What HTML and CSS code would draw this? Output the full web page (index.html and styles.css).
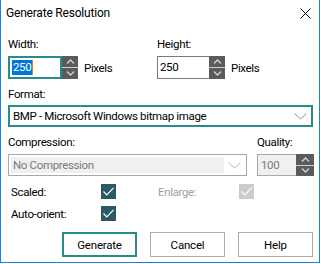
FILE: index.html
```html
<!DOCTYPE html>
<html lang="en">
<head>
  <meta charset="UTF-8">
  <title>Generate Resolution</title>
  <link rel="stylesheet" href="styles.css">
</head>
<body>
  <div class="dialog">
    <!-- Title bar -->
    <div class="titlebar">
      <span class="title">Generate Resolution</span>
      <svg class="close" width="11" height="11" viewBox="0 0 11 11">
        <path d="M0.5 0.5 L10.5 10.5 M10.5 0.5 L0.5 10.5" stroke="#000" stroke-width="1" fill="none"/>
      </svg>
    </div>

    <div class="content">
      <div class="size-row">
        <div class="field">
          <div class="lbl">Width:</div>
          <div class="spin-row">
            <div class="spin">
              <div class="spin-input focused"><span class="sel">250</span><span class="caret"></span></div>
              <div class="spin-btns">
                <span class="btn-up"><svg width="9" height="5" viewBox="0 0 9 5"><path d="M1 4.5 L4.5 1 L8 4.5" stroke="#d4d4d4" stroke-width="1.3" fill="none"/></svg></span>
                <span class="btn-down"><svg width="9" height="5" viewBox="0 0 9 5"><path d="M1 0.5 L4.5 4 L8 0.5" stroke="#d4d4d4" stroke-width="1.3" fill="none"/></svg></span>
              </div>
            </div>
            <span class="unit">Pixels</span>
          </div>
        </div>
        <div class="field">
          <div class="lbl">Height:</div>
          <div class="spin-row">
            <div class="spin">
              <div class="spin-input">250</div>
              <div class="spin-btns">
                <span class="btn-up"><svg width="9" height="5" viewBox="0 0 9 5"><path d="M1 4.5 L4.5 1 L8 4.5" stroke="#d4d4d4" stroke-width="1.3" fill="none"/></svg></span>
                <span class="btn-down"><svg width="9" height="5" viewBox="0 0 9 5"><path d="M1 0.5 L4.5 4 L8 0.5" stroke="#d4d4d4" stroke-width="1.3" fill="none"/></svg></span>
              </div>
            </div>
            <span class="unit">Pixels</span>
          </div>
        </div>
      </div>

      <div class="lbl lbl-format">Format:</div>
      <div class="select focused">
        <span class="select-text">BMP - Microsoft Windows bitmap image</span>
        <svg class="chev" width="13" height="7" viewBox="0 0 13 7"><path d="M0.5 0.5 L6.5 6 L12.5 0.5" stroke="#8a8a8a" stroke-width="1" fill="none"/></svg>
      </div>

      <div class="comp-row">
        <div class="comp-field">
          <div class="lbl">Compression:</div>
          <div class="select disabled">
            <span class="select-text">No Compression</span>
            <svg class="chev" width="13" height="7" viewBox="0 0 13 7"><path d="M0.5 0.5 L6.5 6 L12.5 0.5" stroke="#b4b4b4" stroke-width="1" fill="none"/></svg>
          </div>
        </div>
        <div class="quality-field">
          <div class="lbl">Quality:</div>
          <div class="spin">
            <div class="spin-input disabled">100</div>
            <div class="spin-btns">
              <span class="btn-up"><svg width="9" height="5" viewBox="0 0 9 5"><path d="M1 4.5 L4.5 1 L8 4.5" stroke="#d4d4d4" stroke-width="1.3" fill="none"/></svg></span>
              <span class="btn-down"><svg width="9" height="5" viewBox="0 0 9 5"><path d="M1 0.5 L4.5 4 L8 0.5" stroke="#d4d4d4" stroke-width="1.3" fill="none"/></svg></span>
            </div>
          </div>
        </div>
      </div>

      <div class="check-row">
        <span class="check-lbl">Scaled:</span>
        <span class="checkbox"><svg width="11" height="9" viewBox="0 0 11 9"><path d="M0.5 4.5 L3.8 7.8 L10.5 0.8" stroke="#fff" stroke-width="1.2" fill="none"/></svg></span>
        <span class="check-lbl disabled-text enlarge">Enlarge:</span>
        <span class="checkbox off"><svg width="11" height="9" viewBox="0 0 11 9"><path d="M0.5 4.5 L3.8 7.8 L10.5 0.8" stroke="#fff" stroke-width="1.2" fill="none"/></svg></span>
      </div>
      <div class="check-row">
        <span class="check-lbl">Auto-orient:</span>
        <span class="checkbox"><svg width="11" height="9" viewBox="0 0 11 9"><path d="M0.5 4.5 L3.8 7.8 L10.5 0.8" stroke="#fff" stroke-width="1.2" fill="none"/></svg></span>
      </div>

      <div class="buttons">
        <button class="button default">Generate</button>
        <button class="button">Cancel</button>
        <button class="button">Help</button>
      </div>
    </div>
  </div>
</body>
</html>
```

FILE: styles.css
```css
body {
  margin: 0;
  padding: 0;
  background: #fff;
}

.dialog {
  width: 320px;
  height: 263px;
  box-sizing: border-box;
  border: 1px solid #1883d7;
  border-top: none;
  background: #fff;
  font-family: Roboto, "Liberation Sans", Arial, sans-serif;
  font-size: 11.5px;
  letter-spacing: -0.35px;
  color: #000;
}

.titlebar {
  height: 30px;
  display: flex;
  align-items: center;
  justify-content: space-between;
  padding: 0 8px 0 5px;
}

.title {
  font-size: 12px;
  letter-spacing: -0.2px;
  margin-top: -4px;
}

.close {
  margin-top: -3px;
}

.content {
  padding: 7px 6px 0 7px;
}

.lbl {
  height: 15px;
  line-height: 15px;
  margin-bottom: 4px;
}

/* width / height */
.size-row {
  display: flex;
}

.field {
  width: 149px;
}

.spin-row {
  display: flex;
  align-items: center;
  gap: 6px;
}

.spin {
  display: flex;
  height: 23px;
}

.spin-input {
  width: 52px;
  box-sizing: border-box;
  border: 1px solid #7a7a7a;
  border-right: none;
  padding: 0 2px;
  line-height: 21px;
  display: flex;
  align-items: center;
}

.spin-input.focused {
  width: 54px;
  border: 2px solid #2a8b8b;
}

.sel {
  background: #0078d7;
  color: #fff;
  line-height: 15px;
  padding: 0 1px;
}

.caret {
  width: 1px;
  height: 15px;
  background: #e07b28;
}

.spin-btns {
  width: 16px;
  display: flex;
  flex-direction: column;
  gap: 1px;
  background: #cfcfcf;
}

.spin-btns span {
  flex: 1;
  background: #5b5b5b;
  display: flex;
  align-items: center;
  justify-content: center;
}

/* select */
.lbl-format {
  margin-top: 8px;
  margin-bottom: 3px;
}

.select {
  height: 22px;
  box-sizing: border-box;
  border: 1px solid #7a7a7a;
  display: flex;
  align-items: center;
  padding: 2px 5px 2px 2px;
}

.select.focused {
  border: 2px solid #2a8b8b;
  padding: 0 4px 0 2px;
}

.select-text {
  flex: 1;
  padding-left: 1px;
}

.select.disabled {
  border-color: #a8a8a8;
  color: #7a7a7a;
}

.select.disabled .select-text {
  background: #f0f0f0;
  align-self: stretch;
  display: flex;
  align-items: center;
  padding-left: 2px;
  margin-right: 4px;
}

/* compression / quality */
.comp-row {
  display: flex;
  margin-top: 8px;
}

.comp-field {
  width: 239px;
}

.comp-field .select {
  width: 239px;
}

.quality-field {
  margin-left: 10px;
}

.quality-field .spin {
  height: 22px;
}

.spin-input.disabled {
  width: 39px;
  border-color: #a8a8a8;
  background: #f0f0f0;
  color: #7a7a7a;
  padding-left: 3px;
}

.quality-field .spin-btns {
  width: 18px;
}

/* checkboxes */
.check-row {
  display: flex;
  align-items: center;
  height: 15px;
  margin-top: 8px;
  padding-left: 3px;
}

.check-row + .check-row {
  margin-top: 7px;
}

.check-lbl {
  width: 90px;
}

.check-lbl.enlarge {
  width: 81px;
  margin-left: 42px;
}

.disabled-text {
  color: #a0a0a0;
}

.checkbox {
  width: 15px;
  height: 15px;
  background: #2c5966;
  display: flex;
  align-items: center;
  justify-content: center;
}

.checkbox.off {
  background: #cccccc;
}

/* buttons */
.buttons {
  display: flex;
  justify-content: flex-end;
  gap: 13px;
  margin-top: 11px;
}

.button {
  width: 75px;
  height: 25px;
  box-sizing: border-box;
  background: #fff;
  border: 1px solid #adadad;
  font-family: Roboto, "Liberation Sans", Arial, sans-serif;
  font-size: 11.5px;
  letter-spacing: -0.2px;
  color: #000;
  padding: 0;
}

.button.default {
  border: 2px solid #2a8b8b;
}
```
